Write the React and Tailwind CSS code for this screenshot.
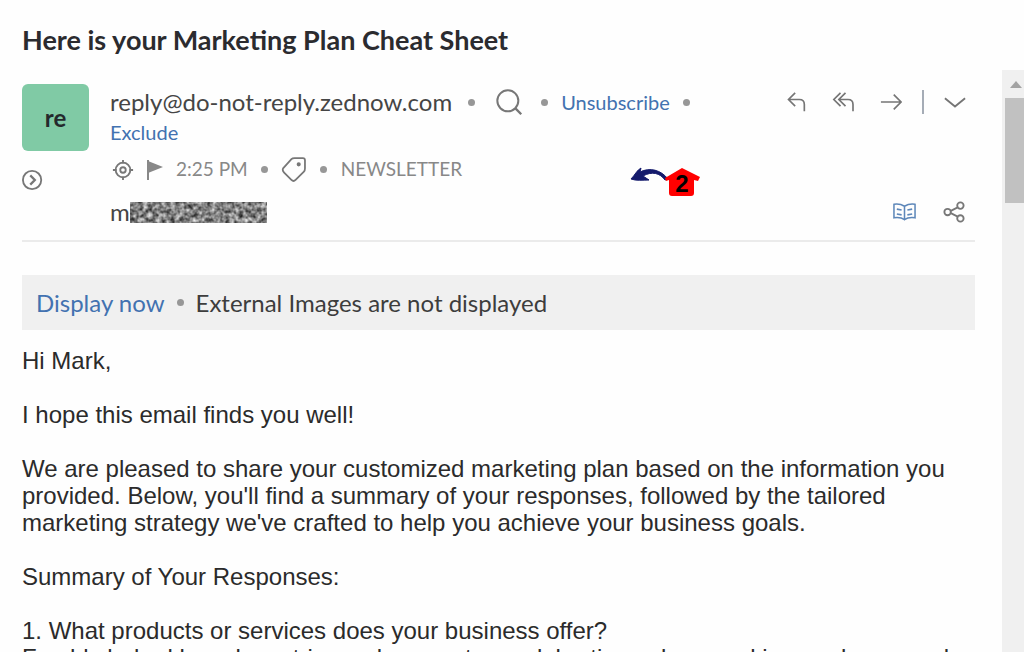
const paragraphs = [
    'Hi Mark,',
    'I hope this email finds you well!',
    "We are pleased to share your customized marketing plan based on the information you provided. Below, you'll find a summary of your responses, followed by the tailored marketing strategy we've crafted to help you achieve your business goals.",
    'Summary of Your Responses:',
];

function Dot() {
    return <span className="w-[7px] h-[7px] rounded-full bg-[#979797] shrink-0" />;
}

function Icon({ children, className = '', viewBox = '0 0 24 24' }) {
    return (
        <svg viewBox={viewBox} fill="none" stroke="currentColor" strokeWidth="2" className={className} aria-hidden="true">
            {children}
        </svg>
    );
}

// grainy strip that hides the recipient address
function Redacted() {
    return (
        <svg width="139" height="24" viewBox="0 0 139 24" role="img" aria-label="Hidden address">
            <filter id="grain" x="0" y="0" width="100%" height="100%" colorInterpolationFilters="sRGB">
                <feTurbulence type="fractalNoise" baseFrequency="0.22" numOctaves="2" seed="4" />
                <feColorMatrix values="1.1 0 0 0 -0.04  1.1 0 0 0 -0.04  1.1 0 0 0 -0.04  0 0 0 0 1" />
            </filter>
            <rect x="0" y="2" width="137" height="21" filter="url(#grain)" />
        </svg>
    );
}

function Toolbar() {
    return (
        <div className="flex items-center text-[#757575] pr-[9px]">
            <button aria-label="Reply">
                <Icon className="w-5 h-5"><path d="M11 1 3 9l8 8M3 9h13q6 0 6 6v8" /></Icon>
            </button>
            <button aria-label="Reply all" className="ml-[26px]">
                <Icon className="w-[22px] h-5" viewBox="0 0 26 24"><path d="M10 1 2 9l8 8M16 1 8 9l8 8M8 9h11q6 0 6 6v8" /></Icon>
            </button>
            <button aria-label="Forward" className="ml-[26px]">
                <Icon className="w-[22px] h-[22px]"><path d="M1 12h22M15 4l8 8-8 8" strokeWidth="1.8" /></Icon>
            </button>
            <span className="w-[2px] h-6 bg-[#a5acb6] ml-5" />
            <button aria-label="More actions" className="ml-5">
                <Icon className="w-[22px] h-[22px]"><path d="m1 8 11 9 11-9" /></Icon>
            </button>
        </div>
    );
}

function Marker() {
    return (
        <div className="absolute right-[275px] top-[97px] w-[70px] h-8">
            <svg viewBox="0 0 70 32" className="w-full h-full" aria-hidden="true">
                <path d="M38 12C31 3 20 0 10 5l1-4C7 3 5 8 1 12c5 2 12 1 18 1l-6-4c9-5 17-3 22 4Z" fill="#141a6c" stroke="#141a6c" strokeWidth="1" strokeLinejoin="round" />
                <path d="M35 11 52 1l18 9-2 4-4-1v13q0 3-3 3H42q-3 0-3-3V13l-3 1Z" fill="#f00" />
            </svg>
            <span className="absolute left-[39px] top-[3px] w-[26px] text-center font-['Liberation_Sans'] text-2xl leading-7 font-bold text-black">2</span>
        </div>
    );
}

function MessageHeader() {
    return (
        <header className="relative flex border-b-2 border-[#ebebeb] pb-2">
            <div className="w-[88px] shrink-0 pt-[14px]">
                <div className="w-[67px] h-[67px] rounded-md bg-[#80caa5] flex items-center justify-center text-2xl font-bold text-[#24292c]">re</div>
                <button aria-label="Expand" className="block mt-[18px] text-[#777]">
                    <Icon className="w-[22px] h-[22px]"><circle cx="11" cy="12" r="10" /><path d="m9 7 5 5-5 5" strokeWidth="2.5" /></Icon>
                </button>
            </div>
            <div className="flex-1 min-w-0">
                <div className="flex justify-between items-start pt-[17px]">
                    <div>
                        <div className="flex items-center h-[30px] text-xl">
                            <span className="text-2xl text-[#454545]">reply@do-not-reply.zednow.com</span>
                            <span className="ml-4 flex"><Dot /></span>
                            <button aria-label="Search sender" className="ml-5 text-[#777]">
                                <Icon className="w-7 h-7"><circle cx="11" cy="11" r="9" strokeWidth="1.7" /><path d="m17.5 17.5 5 5" /></Icon>
                            </button>
                            <span className="ml-[18px] flex"><Dot /></span>
                            <a href="#unsubscribe" className="mx-[13px] text-[#4272b0]">Unsubscribe</a>
                            <Dot />
                        </div>
                        <a href="#exclude" className="block text-xl leading-[30px] text-[#4272b0]">Exclude</a>
                    </div>
                    <div className="flex items-center h-[30px]"><Toolbar /></div>
                </div>
                <div className="flex items-center h-[45px] text-[19px] text-[#888]">
                    <Icon className="w-[22px] h-[22px] ml-[2px] text-[#777]">
                        <circle cx="12" cy="12" r="8" /><circle cx="12" cy="12" r="3" /><path d="M12 1v4M12 19v4M1 12h4M19 12h4" />
                    </Icon>
                    <svg viewBox="0 0 17 20" className="w-[17px] h-5 ml-[13px]" aria-hidden="true">
                        <path d="M1 0v20" stroke="#888" strokeWidth="2" /><path d="m1 1 15 6-15 6Z" fill="#888" />
                    </svg>
                    <span className="ml-3">2:25 PM</span>
                    <span className="mx-[13px] flex"><Dot /></span>
                    <Icon className="w-[25px] h-[25px] text-[#777]">
                        <path d="m2 11 8-9q1-1 3-1h8q2 0 2 2v8q0 2-1 3l-8 8q-2 2-4 0l-7-7q-2-2-1-4Z" strokeWidth="1.7" /><circle cx="17" cy="7" r="1" />
                    </Icon>
                    <span className="mx-[14px] flex"><Dot /></span>
                    <span>NEWSLETTER</span>
                </div>
                <div className="flex items-center justify-between h-10">
                    <div className="flex items-center text-2xl text-[#454545]"><span>m</span><Redacted /></div>
                    <div className="flex items-center gap-[27px] pr-[10px]">
                        <button aria-label="Reading view" className="text-[#5d87b9]">
                            <Icon className="w-[23px] h-5" viewBox="0 0 24 20">
                                <path d="M12 4Q7 1 1 2v14q7-1 11 2 4-3 11-2V2q-6-1-11 2v14M4 7l5 1M4 12l5 1M20 7l-5 1M20 12l-5 1" strokeWidth="1.6" />
                            </Icon>
                        </button>
                        <button aria-label="Share" className="text-[#777]">
                            <Icon className="w-[22px] h-[22px]">
                                <circle cx="5" cy="12" r="3.5" /><circle cx="19" cy="5" r="3.5" /><circle cx="19" cy="19" r="3.5" /><path d="m8 11 8-4M8 13l8 4" />
                            </Icon>
                        </button>
                    </div>
                </div>
            </div>
            <Marker />
        </header>
    );
}

function Scrollbar() {
    return (
        <div className="w-[22px] shrink-0 bg-[#f0f0f0] flex flex-col items-center" aria-hidden="true">
            <svg viewBox="0 0 22 28" className="w-[22px] h-7"><path d="m8 18 6-7 6 7Z" fill="#a3a3a3" /></svg>
            <div className="w-[19px] h-[105px] bg-[#c1c1c1] self-end" />
        </div>
    );
}

export default function App() {
    return (
        <div className="h-screen flex flex-col overflow-hidden bg-[#fefefe] font-['Lato',sans-serif]">
            <h1 className="h-[70px] shrink-0 px-[22px] pt-6 text-[27px] leading-8 font-bold text-[#2b2b2f]">Here is your Marketing Plan Cheat Sheet</h1>
            <div className="flex flex-1 min-h-0">
                <main className="flex-1 min-w-0 pl-[22px] pr-[27px] overflow-hidden">
                    <MessageHeader />
                    <div className="flex items-center mt-[33px] px-[14px] h-[55px] bg-[#f0f0f0] text-2xl text-[#3d3d3d]">
                        <button className="text-[#4272b0]">Display now</button>
                        <span className="mx-3 flex"><Dot /></span>
                        <span>External Images are not displayed</span>
                    </div>
                    <article className="mt-[17px] font-['Liberation_Sans',sans-serif] text-[24px] leading-[27px] text-[#2b2b2b]">
                        {paragraphs.map((text) => <p key={text} className="mb-[27px]">{text}</p>)}
                        <p>1. What products or services does your business offer?</p>
                        <p>Freshly baked bread, pastries, cakes, custom celebration cakes, cookies, and seasonal</p>
                    </article>
                </main>
                <Scrollbar />
            </div>
        </div>
    );
}
